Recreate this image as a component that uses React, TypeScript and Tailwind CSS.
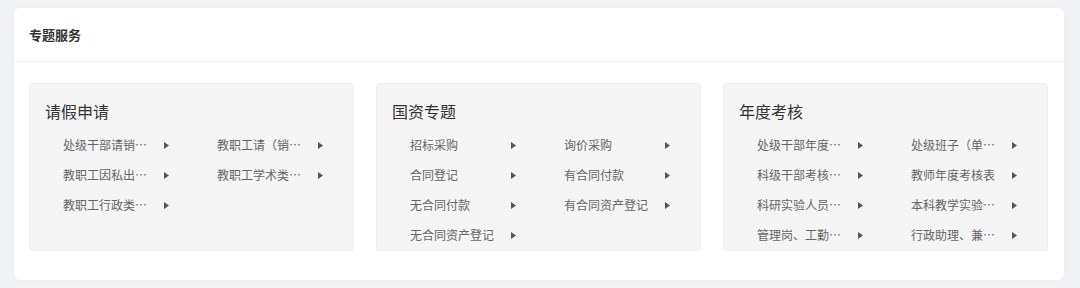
const groups = [
  {
    title: "请假申请",
    items: ["处级干部请销…", "教职工请（销…", "教职工因私出…", "教职工学术类…", "教职工行政类…"],
  },
  {
    title: "国资专题",
    items: [
      "招标采购",
      "询价采购",
      "合同登记",
      "有合同付款",
      "无合同付款",
      "有合同资产登记",
      "无合同资产登记",
    ],
  },
  {
    title: "年度考核",
    items: [
      "处级干部年度…",
      "处级班子（单…",
      "科级干部考核…",
      "教师年度考核表",
      "科研实验人员…",
      "本科教学实验…",
      "管理岗、工勤…",
      "行政助理、兼…",
    ],
  },
];

const Arrow = () => (
  <svg width="5" height="7" viewBox="0 0 5 7" className="shrink-0">
    <polygon points="0,0 5,3.5 0,7" fill="#555555" />
  </svg>
);

const App = () => {
  return (
    <div
      className="w-[1080px] h-[288px] bg-[#f1f2f6] pt-2 pl-[14px] overflow-hidden"
      style={{ fontFamily: '"Noto Sans CJK SC", "Noto Sans", sans-serif' }}
    >
      <div className="w-[1050px] h-[272px] bg-white rounded-md shadow-[0_0_4px_rgba(0,0,0,0.03)]">
        {/* Header */}
        <div className="h-[54px] px-[15px] flex items-center border-b border-[#eeeff2]">
          <h2 className="text-[13px] font-bold text-[#333333]">专题服务</h2>
        </div>

        {/* Groups */}
        <div className="pt-[21px] pl-[15px] pr-[16px] grid grid-cols-3 gap-[22px]">
          {groups.map((group) => (
            <div
              key={group.title}
              className="h-[168px] bg-[#f5f5f5] border border-[#eeeeee] rounded pt-[15px] pl-[15px]"
            >
              <h3 className="text-base leading-6 text-[#333333]">{group.title}</h3>
              <div className="mt-[7px] pl-[18px] grid grid-cols-[154px_154px]">
                {group.items.map((item) => (
                  <div key={item} className="h-[30px] flex items-center">
                    <span className="w-[84px] whitespace-nowrap text-xs text-[#666666]">{item}</span>
                    <span className="ml-[17px] flex items-center">
                      <Arrow />
                    </span>
                  </div>
                ))}
              </div>
            </div>
          ))}
        </div>
      </div>
    </div>
  );
};

export default App;
